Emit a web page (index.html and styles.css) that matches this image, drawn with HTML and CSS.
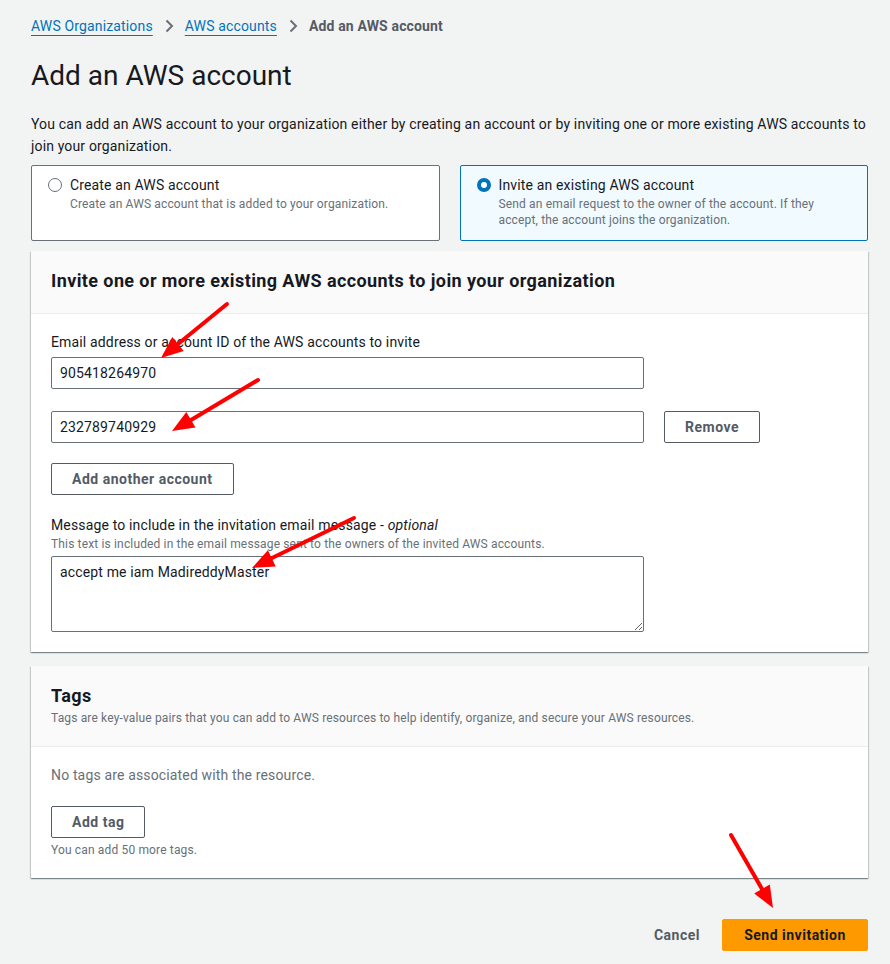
FILE: index.html
```html
<!DOCTYPE html>
<html lang="en">
<head>
<meta charset="utf-8">
<title>Add an AWS account</title>
<link rel="stylesheet" href="styles.css">
</head>
<body>
<div class="page">
  <nav class="breadcrumbs">
    <a href="#" class="crumb-link">AWS Organizations</a>
    <svg class="chev" width="16" height="16" viewBox="0 0 16 16"><path d="M5.5 2.5 11 8l-5.5 5.5" fill="none" stroke="#687078" stroke-width="2"/></svg>
    <a href="#" class="crumb-link">AWS accounts</a>
    <svg class="chev" width="16" height="16" viewBox="0 0 16 16"><path d="M5.5 2.5 11 8l-5.5 5.5" fill="none" stroke="#687078" stroke-width="2"/></svg>
    <span class="crumb-current">Add an AWS account</span>
  </nav>

  <h1 class="title">Add an AWS account</h1>

  <p class="intro">You can add an AWS account to your organization either by creating an account or by inviting one or more existing AWS accounts to join your organization.</p>

  <div class="tiles">
    <label class="tile">
      <span class="radio"></span>
      <span class="tile-text">
        <span class="tile-title">Create an AWS account</span>
        <span class="tile-desc">Create an AWS account that is added to your organization.</span>
      </span>
    </label>
    <label class="tile tile-selected">
      <span class="radio radio-checked"></span>
      <span class="tile-text">
        <span class="tile-title">Invite an existing AWS account</span>
        <span class="tile-desc">Send an email request to the owner of the account. If they<br>accept, the account joins the organization.</span>
      </span>
    </label>
  </div>

  <section class="container">
    <header class="container-header">
      <h2 class="container-title">Invite one or more existing AWS accounts to join your organization</h2>
    </header>
    <div class="container-body">
      <div class="field-label">Email address or account ID of the AWS accounts to invite</div>
      <div class="input-row first-row">
        <input class="text-input" type="text" value="905418264970">
      </div>
      <div class="input-row">
        <input class="text-input" type="text" value="232789740929">
        <button class="btn">Remove</button>
      </div>
      <div class="btn-row">
        <button class="btn">Add another account</button>
      </div>
      <div class="field-label msg-label">Message to include in the invitation email message - <i>optional</i></div>
      <div class="field-desc">This text is included in the email message sent to the owners of the invited AWS accounts.</div>
      <textarea class="text-area">accept me iam MadireddyMaster</textarea>
    </div>
  </section>

  <section class="container tags">
    <header class="container-header">
      <h2 class="container-title">Tags</h2>
      <div class="header-desc">Tags are key-value pairs that you can add to AWS resources to help identify, organize, and secure your AWS resources.</div>
    </header>
    <div class="container-body">
      <div class="empty-text">No tags are associated with the resource.</div>
      <div class="btn-row">
        <button class="btn">Add tag</button>
      </div>
      <div class="field-desc hint">You can add 50 more tags.</div>
    </div>
  </section>

  <div class="actions">
    <button class="btn-link">Cancel</button>
    <button class="btn-primary">Send invitation</button>
  </div>
</div>

<svg class="annotations" width="890" height="964" viewBox="0 0 890 964">
  <g stroke="#ff0000" stroke-width="4" stroke-linecap="round" fill="#ff0000">
    <line x1="227" y1="304" x2="178" y2="344"/>
    <polygon points="161,358 183.7,351.1 172.3,337.1" stroke="none"/>
    <line x1="258" y1="380" x2="191" y2="420"/>
    <polygon points="172,431 195.5,427.5 186.3,412.1" stroke="none"/>
    <line x1="354" y1="518" x2="272" y2="558"/>
    <polygon points="252,568 275.7,566.5 267.9,550.3" stroke="none"/>
    <line x1="731" y1="835" x2="762" y2="889"/>
    <polygon points="773,908 769.8,884.5 754.2,893.5" stroke="none"/>
  </g>
</svg>
</body>
</html>
```

FILE: styles.css
```css
* { box-sizing: border-box; }

html, body {
  margin: 0;
  padding: 0;
  background: #f2f3f3;
}

body {
  font-family: Roboto, "Noto Sans", "Liberation Sans", sans-serif;
  font-size: 14px;
  line-height: 22px;
  letter-spacing: 0.15px;
  color: #16191f;
  position: relative;
  min-height: 964px;
}

.page {
  width: 890px;
  padding: 15px 22px 0 31px;
}

.breadcrumbs {
  display: flex;
  align-items: center;
  height: 22px;
  gap: 9px;
}

.crumb-link {
  color: #0073bb;
  text-decoration: underline;
  text-underline-offset: 4px;
  text-decoration-thickness: 1px;
}

.chev { margin: 0 -1px; }

.crumb-current {
  color: #545b64;
  font-weight: 700;
}

.title {
  margin: 22px 0 0;
  font-size: 28px;
  line-height: 34px;
  font-weight: 400;
  letter-spacing: 0;
  color: #16191f;
}

.intro {
  margin: 20px 0 0;
  color: #16191f;
}

.tiles {
  display: flex;
  gap: 20px;
  margin-top: 8px;
}

.tile {
  flex: 1;
  display: flex;
  align-items: flex-start;
  gap: 8px;
  height: 76px;
  padding: 8px 16px 10px 16px;
  background: #ffffff;
  border: 1px solid #687078;
  border-radius: 2px;
}

.tile-selected {
  background: #f1faff;
  border-color: #0073bb;
}

.radio {
  flex: none;
  width: 14px;
  height: 14px;
  margin-top: 4px;
  border: 1.5px solid #687078;
  border-radius: 50%;
  background: #fff;
}

.radio-checked {
  border: 4px solid #0073bb;
}

.tile-text {
  display: flex;
  flex-direction: column;
}

.tile-title {
  font-size: 14px;
  line-height: 22px;
  color: #16191f;
}

.tile-desc {
  font-size: 12px;
  line-height: 16px;
  color: #687078;
}

.container {
  margin-top: 10px;
  width: 837px;
  background: #ffffff;
  box-shadow: 0 1px 1px 0 rgba(0, 28, 36, 0.3), 1px 1px 1px 0 rgba(0, 28, 36, 0.15), -1px 1px 1px 0 rgba(0, 28, 36, 0.15);
}

.container-header {
  background: #fafafa;
  border-bottom: 1px solid #eaeded;
  padding: 18px 20px 20px;
}

.container-title {
  margin: 0;
  font-size: 18px;
  line-height: 24px;
  font-weight: 700;
  letter-spacing: 0.4px;
  color: #16191f;
}

.header-desc {
  font-size: 12px;
  line-height: 16px;
  color: #687078;
  margin-top: 2px;
}

.container-body {
  padding: 17px 20px 20px;
}

.field-label {
  color: #16191f;
}

.input-row {
  display: flex;
  align-items: center;
  gap: 20px;
  margin-top: 22px;
}

.input-row.first-row { margin-top: 4px; }

.text-input {
  width: 593px;
  height: 32px;
  padding: 4px 8px;
  border: 1px solid #687078;
  border-radius: 2px;
  font: inherit;
  letter-spacing: 0.15px;
  color: #16191f;
  background: #fff;
  outline: none;
}

.btn {
  height: 32px;
  padding: 4px 20px;
  border: 1px solid #545b64;
  border-radius: 2px;
  background: #ffffff;
  color: #545b64;
  font-family: inherit;
  font-size: 14px;
  font-weight: 700;
  line-height: 22px;
  letter-spacing: 0.5px;
  cursor: pointer;
}

.btn-row {
  display: flex;
  margin-top: 20px;
}

.msg-label { margin-top: 19px; }

.field-desc {
  font-size: 12px;
  line-height: 16px;
  color: #687078;
}

.text-area {
  display: block;
  margin-top: 4px;
  width: 593px;
  height: 76px;
  padding: 4px 8px;
  border: 1px solid #687078;
  border-radius: 2px;
  font: inherit;
  letter-spacing: 0.15px;
  color: #16191f;
  resize: vertical;
  outline: none;
}

.tags { margin-top: 14px; }

.empty-text { color: #687078; }

.hint { margin-top: 4px; }

.actions {
  display: flex;
  justify-content: flex-end;
  align-items: center;
  gap: 2px;
  margin-top: 41px;
}

.btn-link {
  height: 32px;
  padding: 4px 20px;
  border: none;
  background: transparent;
  color: #545b64;
  font-family: inherit;
  font-size: 14px;
  font-weight: 700;
  letter-spacing: 0.5px;
}

.btn-primary {
  height: 32px;
  width: 146px;
  padding: 4px 20px;
  border: 1px solid #ff9900;
  border-radius: 2px;
  background: #ff9900;
  color: #16191f;
  font-family: inherit;
  font-size: 14px;
  font-weight: 700;
  letter-spacing: 0.5px;
}

.annotations {
  position: absolute;
  top: 0;
  left: 0;
  pointer-events: none;
}
```
